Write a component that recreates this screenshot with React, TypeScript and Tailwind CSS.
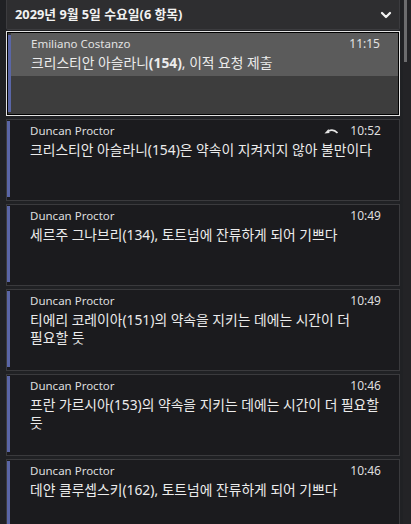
import React from 'react';
import { ChevronDown } from 'lucide-react';

interface Entry {
  id: number;
  author: string;
  time: string;
  text: React.ReactNode;
  replied?: boolean;
}

const entries: Entry[] = [
  {
    id: 2,
    author: 'Duncan Proctor',
    time: '10:52',
    text: '크리스티안 아슬라니(154)은 약속이 지켜지지 않아 불만이다',
    replied: true,
  },
  { id: 3, author: 'Duncan Proctor', time: '10:49', text: '세르주 그나브리(134), 토트넘에 잔류하게 되어 기쁘다' },
  {
    id: 4,
    author: 'Duncan Proctor',
    time: '10:49',
    text: '티에리 코레이아(151)의 약속을 지키는 데에는 시간이 더 필요할 듯',
  },
  {
    id: 5,
    author: 'Duncan Proctor',
    time: '10:46',
    text: '프란 가르시아(153)의 약속을 지키는 데에는 시간이 더 필요할 듯',
  },
  { id: 6, author: 'Duncan Proctor', time: '10:46', text: '데얀 클루셉스키(162), 토트넘에 잔류하게 되어 기쁘다' },
];

const font = { fontFamily: '"Noto Sans", "Noto Sans CJK KR", sans-serif' };

const ReplyIcon = () => (
  <svg width="14" height="7" viewBox="0 0 14 7" className="mr-[12px]">
    <path d="M0.5 5.5 L4.5 1 L5.5 5 Z" fill="#e6e6e6" />
    <path d="M4.5 3 Q9.5 0.5 13.5 5" stroke="#e6e6e6" strokeWidth="1.6" fill="none" />
  </svg>
);

const MessageCard: React.FC<{ entry: Entry }> = ({ entry }) => (
  <div className="mt-[3px] flex h-[82px] shrink-0 border border-[#3a3a3d] bg-[#1b1b1e] py-[1px]">
    <div className="w-[3px] mb-[2px] bg-[#5a66a6]" />
    <div className="flex-1 pl-[20px] pr-[18px] pt-[2px]">
      <div className="flex items-center justify-between text-[12px] leading-[16px] text-[#dedede]">
        <span className="text-[11.5px]">{entry.author}</span>
        <span className="flex items-center">
          {entry.replied && <ReplyIcon />}
          {entry.time}
        </span>
      </div>
      <p className="mt-[2px] break-keep text-[13.8px] leading-[18px] text-[#ececec]">{entry.text}</p>
    </div>
  </div>
);

export default function App() {
  return (
    <div className="flex h-[524px] w-[411px] overflow-hidden bg-[#202124]" style={font}>
      <div className="ml-[6px] flex w-[394px] flex-col">
        {/* day header */}
        <div className="flex h-[30px] shrink-0 items-center justify-between rounded-b-[2px] border border-t-0 border-[#3c3c3f] bg-[#2e2e30] pl-[8px] pr-[5px] pt-[1px]">
          <span className="text-[12.8px] font-bold text-[#f2f2f2]">2029년 9월 5일 수요일(6 항목)</span>
          <ChevronDown size={16} strokeWidth={3.4} color="#f2f2f2" />
        </div>

        {/* selected entry */}
        <div className="mt-[1px] h-[85px] shrink-0 border border-[#e2e2e2]">
          <div className="flex h-full border border-black bg-[#3d3d3d]">
            <div className="w-[3px] mt-[2px] mb-[2px] bg-[#5a66a6]" />
            <div className="flex-1">
              <div className="h-[43px] bg-[#5b5b5b] pl-[20px] pr-[18px] pt-[3px]">
                <div className="flex items-center justify-between text-[12px] leading-[16px] text-[#e2e2e2]">
                  <span className="text-[11.5px]">Emiliano Costanzo</span>
                  <span>11:15</span>
                </div>
                <p className="mt-[2px] break-keep text-[13.8px] leading-[18px] text-[#ececec]">
                  크리스티안 아슬라니<span className="font-bold">(154)</span>, 이적 요청 제출
                </p>
              </div>
            </div>
          </div>
        </div>

        {entries.map((e) => (
          <MessageCard key={e.id} entry={e} />
        ))}
      </div>

      {/* scrollbar */}
      <div className="ml-[3px] w-[8px] bg-[#232326]">
        <div className="ml-[1px] h-[62px] w-[3px] bg-[#6c6c6e]" />
      </div>
    </div>
  );
}
